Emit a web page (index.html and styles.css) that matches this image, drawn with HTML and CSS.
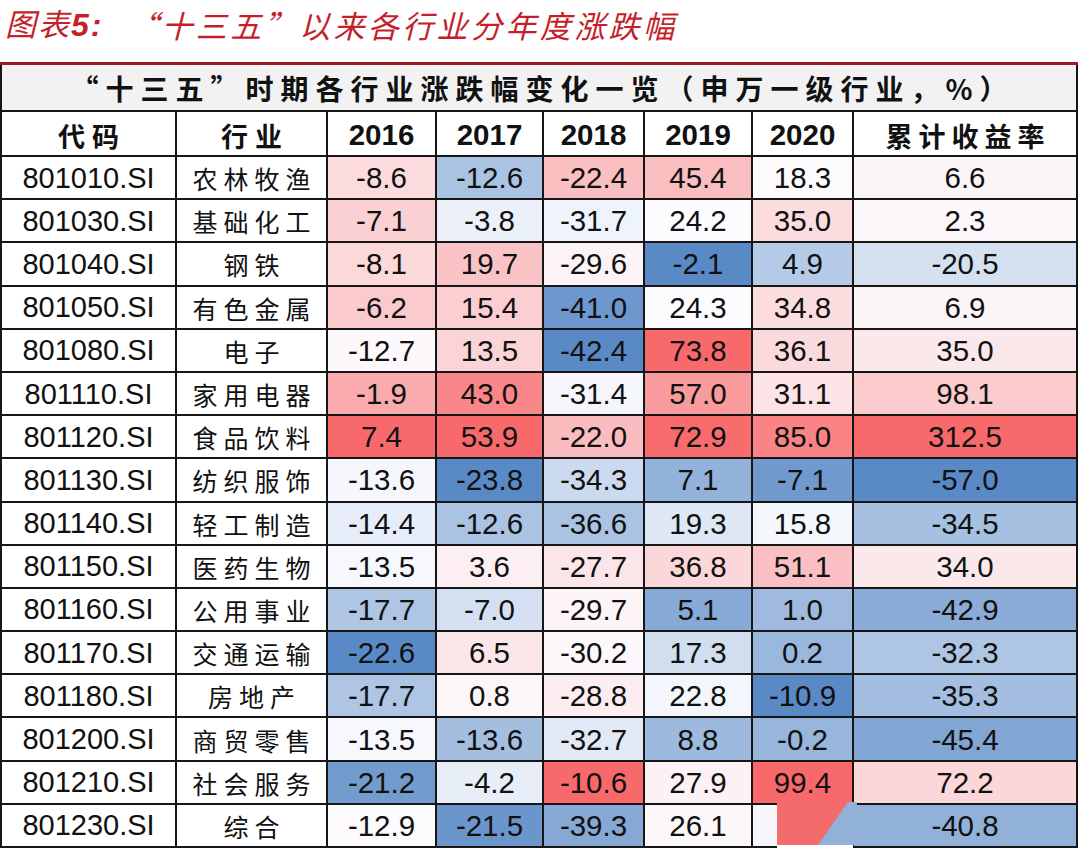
FILE: index.html
```html
<!DOCTYPE html>
<html lang="zh-CN">
<head>
<meta charset="utf-8">
<title>十三五 行业涨跌幅</title>
<link rel="stylesheet" href="styles.css">
</head>
<body>
<div class="page">
  <div class="caption"><span class="cap-label">图表<b>5:</b></span><span class="cap-text">“十三五”以来各行业分年度涨跌幅</span></div>
  <div class="sheet">
    <div class="band">“十三五”时期各行业涨跌幅变化一览（申万一级行业，%）</div>
    <div class="hd cjk-hd">代码</div>
    <div class="hd cjk-hd">行业</div>
    <div class="hd year">2016</div>
    <div class="hd year">2017</div>
    <div class="hd year">2018</div>
    <div class="hd year">2019</div>
    <div class="hd year">2020</div>
    <div class="hd cjk-hd cum-hd">累计收益率</div>

    <div class="c code">801010.SI</div><div class="c name">农林牧渔</div><div class="c num" data-col="2016">-8.6</div><div class="c num" data-col="2017">-12.6</div><div class="c num" data-col="2018">-22.4</div><div class="c num" data-col="2019">45.4</div><div class="c num" data-col="2020">18.3</div><div class="c num" data-col="cum">6.6</div>
    <div class="c code">801030.SI</div><div class="c name">基础化工</div><div class="c num" data-col="2016">-7.1</div><div class="c num" data-col="2017">-3.8</div><div class="c num" data-col="2018">-31.7</div><div class="c num" data-col="2019">24.2</div><div class="c num" data-col="2020">35.0</div><div class="c num" data-col="cum">2.3</div>
    <div class="c code">801040.SI</div><div class="c name">钢铁</div><div class="c num" data-col="2016">-8.1</div><div class="c num" data-col="2017">19.7</div><div class="c num" data-col="2018">-29.6</div><div class="c num" data-col="2019">-2.1</div><div class="c num" data-col="2020">4.9</div><div class="c num" data-col="cum">-20.5</div>
    <div class="c code">801050.SI</div><div class="c name">有色金属</div><div class="c num" data-col="2016">-6.2</div><div class="c num" data-col="2017">15.4</div><div class="c num" data-col="2018">-41.0</div><div class="c num" data-col="2019">24.3</div><div class="c num" data-col="2020">34.8</div><div class="c num" data-col="cum">6.9</div>
    <div class="c code">801080.SI</div><div class="c name">电子</div><div class="c num" data-col="2016">-12.7</div><div class="c num" data-col="2017">13.5</div><div class="c num" data-col="2018">-42.4</div><div class="c num" data-col="2019">73.8</div><div class="c num" data-col="2020">36.1</div><div class="c num" data-col="cum">35.0</div>
    <div class="c code">801110.SI</div><div class="c name">家用电器</div><div class="c num" data-col="2016">-1.9</div><div class="c num" data-col="2017">43.0</div><div class="c num" data-col="2018">-31.4</div><div class="c num" data-col="2019">57.0</div><div class="c num" data-col="2020">31.1</div><div class="c num" data-col="cum">98.1</div>
    <div class="c code">801120.SI</div><div class="c name">食品饮料</div><div class="c num" data-col="2016">7.4</div><div class="c num" data-col="2017">53.9</div><div class="c num" data-col="2018">-22.0</div><div class="c num" data-col="2019">72.9</div><div class="c num" data-col="2020">85.0</div><div class="c num" data-col="cum">312.5</div>
    <div class="c code">801130.SI</div><div class="c name">纺织服饰</div><div class="c num" data-col="2016">-13.6</div><div class="c num" data-col="2017">-23.8</div><div class="c num" data-col="2018">-34.3</div><div class="c num" data-col="2019">7.1</div><div class="c num" data-col="2020">-7.1</div><div class="c num" data-col="cum">-57.0</div>
    <div class="c code">801140.SI</div><div class="c name">轻工制造</div><div class="c num" data-col="2016">-14.4</div><div class="c num" data-col="2017">-12.6</div><div class="c num" data-col="2018">-36.6</div><div class="c num" data-col="2019">19.3</div><div class="c num" data-col="2020">15.8</div><div class="c num" data-col="cum">-34.5</div>
    <div class="c code">801150.SI</div><div class="c name">医药生物</div><div class="c num" data-col="2016">-13.5</div><div class="c num" data-col="2017">3.6</div><div class="c num" data-col="2018">-27.7</div><div class="c num" data-col="2019">36.8</div><div class="c num" data-col="2020">51.1</div><div class="c num" data-col="cum">34.0</div>
    <div class="c code">801160.SI</div><div class="c name">公用事业</div><div class="c num" data-col="2016">-17.7</div><div class="c num" data-col="2017">-7.0</div><div class="c num" data-col="2018">-29.7</div><div class="c num" data-col="2019">5.1</div><div class="c num" data-col="2020">1.0</div><div class="c num" data-col="cum">-42.9</div>
    <div class="c code">801170.SI</div><div class="c name">交通运输</div><div class="c num" data-col="2016">-22.6</div><div class="c num" data-col="2017">6.5</div><div class="c num" data-col="2018">-30.2</div><div class="c num" data-col="2019">17.3</div><div class="c num" data-col="2020">0.2</div><div class="c num" data-col="cum">-32.3</div>
    <div class="c code">801180.SI</div><div class="c name">房地产</div><div class="c num" data-col="2016">-17.7</div><div class="c num" data-col="2017">0.8</div><div class="c num" data-col="2018">-28.8</div><div class="c num" data-col="2019">22.8</div><div class="c num" data-col="2020">-10.9</div><div class="c num" data-col="cum">-35.3</div>
    <div class="c code">801200.SI</div><div class="c name">商贸零售</div><div class="c num" data-col="2016">-13.5</div><div class="c num" data-col="2017">-13.6</div><div class="c num" data-col="2018">-32.7</div><div class="c num" data-col="2019">8.8</div><div class="c num" data-col="2020">-0.2</div><div class="c num" data-col="cum">-45.4</div>
    <div class="c code">801210.SI</div><div class="c name">社会服务</div><div class="c num" data-col="2016">-21.2</div><div class="c num" data-col="2017">-4.2</div><div class="c num" data-col="2018">-10.6</div><div class="c num" data-col="2019">27.9</div><div class="c num" data-col="2020">99.4</div><div class="c num" data-col="cum">72.2</div>
    <div class="c code">801230.SI</div><div class="c name">综合</div><div class="c num" data-col="2016">-12.9</div><div class="c num" data-col="2017">-21.5</div><div class="c num" data-col="2018">-39.3</div><div class="c num" data-col="2019">26.1</div><div class="c num" data-col="2020" data-v="16"></div><div class="c num" data-col="cum">-40.8</div>
  </div>
  <svg class="artifact" width="80" height="47" viewBox="0 0 80 47">
    <rect x="30" y="0" width="50" height="43" fill="#91b1d9"/>
    <polygon points="0,0 71,0 41,43 0,43" fill="#f46b6b"/>
    <rect x="0" y="43" width="76" height="4" fill="#ffffff"/>
  </svg>
</div>
<script src="script.js"></script>
</body>
</html>
```

FILE: styles.css
```css
* { box-sizing: border-box; }
body {
  margin: 0;
  background: #ffffff;
}
.page {
  position: relative;
  width: 1080px;
  height: 849px;
  overflow: hidden;
  background: #ffffff;
  color: #111111;
}
.caption {
  height: 62px;
  display: flex;
  align-items: center;
  padding-left: 5px;
  padding-bottom: 14px;
  color: #c41f2b;
  font-family: "Noto Sans CJK SC", sans-serif;
  font-style: italic;
  font-size: 31px;
  line-height: 1;
}
.cap-label {
  width: 122px;
  letter-spacing: 2px;
}
.cap-label b {
  font-family: "Liberation Sans", sans-serif;
  font-weight: 700;
  font-size: 32px;
}
.cap-text {
  letter-spacing: 3.4px;
}
.sheet {
  display: grid;
  grid-template-columns: 173px 149px 107px 105px 99px 106px 99px 222px;
  grid-template-rows: 45px 43px repeat(16, 41.2px);
  gap: 2px;
  width: 1078px;
  background: #161616;
  border-top: 3px solid #9e1a22;
  padding: 0 2px 2px 2px;
}
.band {
  grid-column: 1 / -1;
  background: #f2f2f2;
  display: flex;
  align-items: center;
  justify-content: center;
  font-family: "Noto Sans CJK SC", sans-serif;
  font-weight: 700;
  font-size: 28px;
  letter-spacing: 7px;
  padding-left: 7px;
}
.hd, .c {
  background: #ffffff;
  display: flex;
  align-items: center;
  justify-content: center;
  white-space: nowrap;
}
.hd {
  padding-top: 3px;
}
.cjk-hd {
  font-family: "Noto Sans CJK SC", sans-serif;
  font-weight: 700;
  font-size: 27px;
  letter-spacing: 7px;
  padding-left: 7px;
}
.cum-hd {
  letter-spacing: 6px;
  padding-left: 6px;
}
.year {
  font-family: "Liberation Sans", Arial, sans-serif;
  font-weight: 700;
  font-size: 29.5px;
}
.c {
  padding-top: 1px;
}
.code {
  font-family: "Liberation Sans", Arial, sans-serif;
  font-size: 29px;
}
.name {
  font-family: "Noto Sans CJK SC", sans-serif;
  font-size: 25px;
  letter-spacing: 6px;
  padding-left: 6px;
}
.num {
  font-family: "Liberation Sans", Arial, sans-serif;
  font-size: 29.5px;
}
.artifact {
  position: absolute;
  left: 777px;
  top: 802px;
}
```

FILE: script.js
```js
(function () {
  var LOW = [90, 138, 198];
  var MID = [252, 252, 255];
  var HIGH = [248, 105, 107];
  function mix(a, b, t) {
    return 'rgb(' + a.map(function (v, i) { return Math.round(v + (b[i] - v) * t); }).join(',') + ')';
  }
  function median(arr) {
    var s = arr.slice().sort(function (x, y) { return x - y; });
    var m = (s.length - 1) / 2;
    return (s[Math.floor(m)] + s[Math.ceil(m)]) / 2;
  }
  ['2016', '2017', '2018', '2019', '2020', 'cum'].forEach(function (col) {
    var cells = Array.prototype.slice.call(document.querySelectorAll('.num[data-col="' + col + '"]'));
    var vals = cells.map(function (c) {
      return parseFloat(c.dataset.v !== undefined ? c.dataset.v : c.textContent);
    });
    var mn = Math.min.apply(null, vals), mx = Math.max.apply(null, vals), md = median(vals);
    cells.forEach(function (c, i) {
      var v = vals[i];
      var color = v >= md ? mix(MID, HIGH, (v - md) / (mx - md)) : mix(MID, LOW, (md - v) / (md - mn));
      c.style.backgroundColor = color;
    });
  });
})();
```
